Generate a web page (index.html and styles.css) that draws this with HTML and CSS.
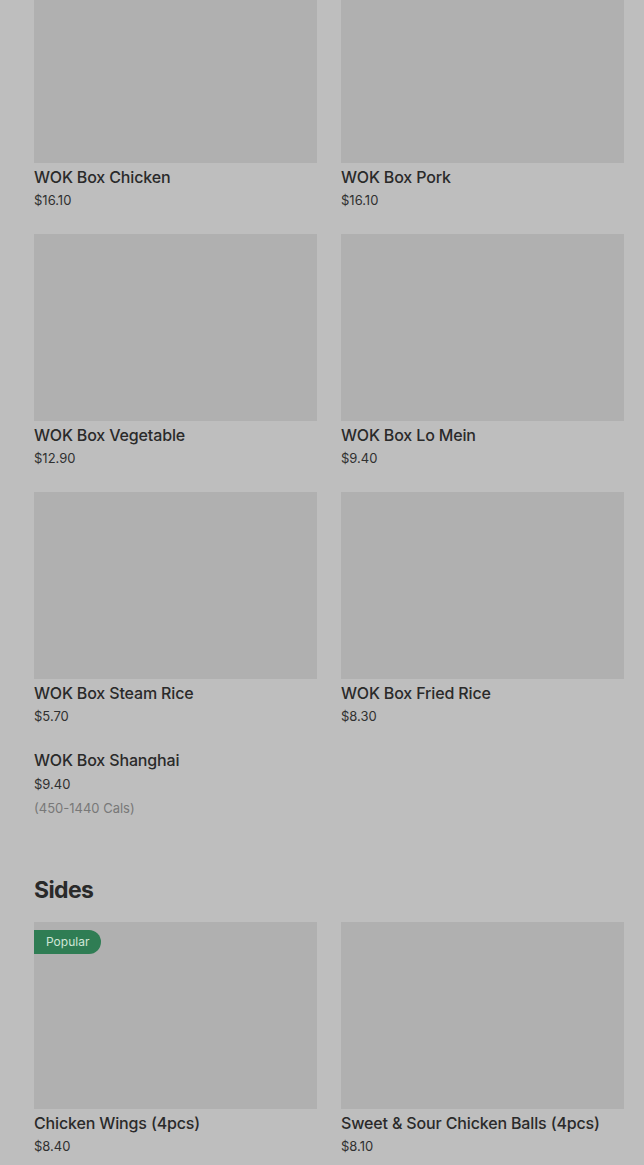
FILE: index.html
```html
<!DOCTYPE html>
<html lang="en">
<head>
	<meta charset="UTF-8">
	<meta name="viewport" content="width=device-width, initial-scale=1">
	<title>WOK Box menu</title>
	<link rel="stylesheet" href="styles.css">
</head>
<body>

	<div class="menu">
		<div class="grid first">
			<div class="item">
				<div class="photo"></div>
				<div class="name">WOK Box Chicken</div>
				<div class="price">$16.10</div>
			</div>
			<div class="item">
				<div class="photo"></div>
				<div class="name">WOK Box Pork</div>
				<div class="price">$16.10</div>
			</div>
			<div class="item">
				<div class="photo"></div>
				<div class="name">WOK Box Vegetable</div>
				<div class="price">$12.90</div>
			</div>
			<div class="item">
				<div class="photo"></div>
				<div class="name">WOK Box Lo Mein</div>
				<div class="price">$9.40</div>
			</div>
			<div class="item">
				<div class="photo"></div>
				<div class="name">WOK Box Steam Rice</div>
				<div class="price">$5.70</div>
			</div>
			<div class="item">
				<div class="photo"></div>
				<div class="name">WOK Box Fried Rice</div>
				<div class="price">$8.30</div>
			</div>
			<div class="item">
				<div class="name">WOK Box Shanghai</div>
				<div class="price">$9.40</div>
				<div class="cals">(450-1440 Cals)</div>
			</div>
		</div>

		<h2 class="section">Sides</h2>

		<div class="grid">
			<div class="item">
				<div class="photo">
					<span class="badge">Popular</span>
				</div>
				<div class="name">Chicken Wings (4pcs)</div>
				<div class="price">$8.40</div>
			</div>
			<div class="item">
				<div class="photo"></div>
				<div class="name">Sweet &amp; Sour Chicken Balls (4pcs)</div>
				<div class="price">$8.10</div>
			</div>
		</div>
	</div>

</body>
</html>
```

FILE: styles.css
```css
html, body {
	margin: 0;
	background: #bebebe;
	color: #2a2a2a;
	font-family: Inter, "Noto Sans", sans-serif;
	overflow: hidden;
}

.menu {
	padding: 0 20px 0 34px;
}

.grid {
	display: grid;
	grid-template-columns: 283px 283px;
	column-gap: 24px;
	row-gap: 25px;
}

.grid.first {
	margin-top: -24px;
}

.item {
	display: flex;
	flex-direction: column;
}

.photo {
	position: relative;
	height: 187px;
	background: #b0b0b0;
}

.name {
	margin-top: 4px;
	font-size: 16px;
	font-weight: 500;
	line-height: 20px;
	letter-spacing: -0.15px;
}

.price {
	margin-top: 4px;
	font-size: 13px;
	line-height: 18px;
	color: #303030;
}

.cals {
	margin-top: 6px;
	font-size: 13px;
	line-height: 18px;
	color: #787878;
}

.item:not(:has(.photo)) .name {
	margin-top: 0;
}

.item:not(:has(.photo)) .price {
	margin-top: 5px;
}

.section {
	margin: 57px 0 16px;
	font-size: 23px;
	font-weight: 700;
	line-height: 32px;
	letter-spacing: -0.6px;
}

.badge {
	position: absolute;
	left: 0;
	top: 8px;
	height: 24px;
	padding: 0 12px;
	border-radius: 0 12px 12px 0;
	background: #2f7d54;
	color: #cfe6d7;
	font-size: 12px;
	line-height: 24px;
}
```
